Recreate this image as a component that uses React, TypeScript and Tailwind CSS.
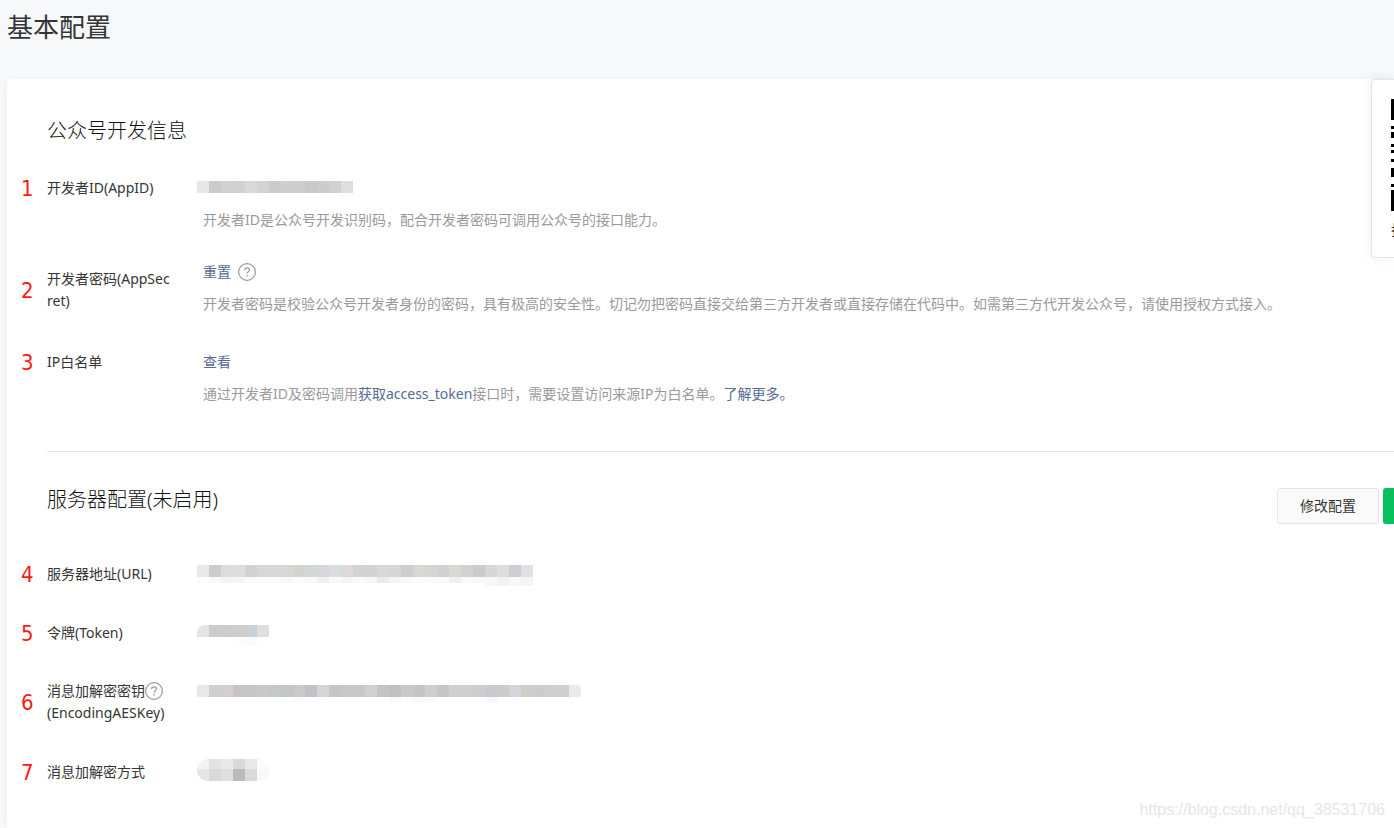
import type { ReactNode } from 'react'

const CELL = 12

type Band = { height: number; colors: string[] }

const appIdBands: Band[] = [
  {
    height: 12,
    colors: ['#e8e6e6', '#cbcacc', '#d2d1d2', '#d1d0cf', '#d8dad9', '#d3d3d4', '#cbcacc', '#cfcdce', '#cfcdca', '#c9c9ca', '#cdcccd', '#d0d2d2', '#dfdedf'],
  },
]

const urlBands: Band[] = [
  {
    height: 12,
    colors: ['#e9e9e9', '#cacccf', '#dddcda', '#dcdddd', '#d2d2d2', '#d6d8d7', '#d7d8d7', '#d7d7da', '#d4d3ce', '#d4d7d8', '#d7d7da', '#d8dde1', '#dcdad8', '#d2d2d1', '#d3d3d6', '#d8d8d9', '#d6d6da', '#cdcdd0', '#d8d7d3', '#d5d5d4', '#d1d1d4', '#dad8d4', '#d2d2d2', '#cdcacf', '#d7d6d2', '#dededf', '#cecdd3', '#e0e2e1'],
  },
  {
    height: 6,
    colors: ['#fcfcfc', '#f8f9f9', '#f2f4f3', '#f4f6f5', '#fafafa', '#fafafa', '#fbfbfb', '#f7f7f7', '#fafbfa', '#f8f9f8', '#f0f0f0', '#f8f9f9', '#f4f4f4', '#f9f9f9', '#f6f6f6', '#eaeaea', '#f4f4f4', '#f8f8f8', '#fafafa', '#f9fbfa', '#f8f9f9', '#eff0ee', '#f9f9f9', '#f8f8f8', '#f7f8f8', '#f1f1f2', '#f8f8f8', '#f3f5f4'],
  },
  {
    height: 3,
    colors: [...Array(24).fill('#ffffff'), '#f7f8f8', '#f1f1f2', '#f8f8f8', '#f3f5f4'],
  },
]

const tokenBands: Band[] = [
  { height: 12, colors: ['#e5e5e5', '#cdcbce', '#cccccc', '#cecdca', '#cad0d3', '#dedede'] },
  { height: 9, colors: ['#ffffff', '#ffffff', '#ffffff', '#fefdfb', '#f9fcff', '#ffffff'] },
]

const aesKeyBands: Band[] = [
  {
    height: 12,
    colors: ['#e9e8e6', '#cdcfd2', '#d1d0cf', '#c9c3c8', '#c5c6c5', '#c8cac5', '#c3c9ca', '#c5c6c3', '#cac9c8', '#c2c1c7', '#d5d5d2', '#c4c5c6', '#c8c9c4', '#cbc7c9', '#ced0d3', '#c0c7c3', '#c1bfc1', '#c9c9c9', '#c3c5c8', '#cfcfd0', '#c7c6c4', '#d0d0d1', '#ccd0cf', '#cfcdcc', '#cac9d0', '#caccc7', '#d4d4db', '#cecdca', '#cacccf', '#cfcfcc', '#cfcfcf', '#e8ebe9'],
  },
  {
    height: 6,
    colors: [...Array(8).fill('#ffffff'), '#fbfbfc', ...Array(7).fill('#ffffff'), '#fafafa', '#fdfefc', '#f9fbfa', '#fafafa', ...Array(4).fill('#ffffff'), '#f9f9fb'],
  },
]

const modeBands: Band[] = [
  { height: 10, colors: ['#f2f3f2', '#e4e2e0', '#e7eae8', '#d8dad9', '#e8e8e7', '#fbfbfe'] },
  { height: 12, colors: ['#e5e5e4', '#dad9d7', '#dfe0e1', '#babbbd', '#dadada', '#f8f8f9'] },
]

function Mosaic({ bands, className = '' }: { bands: Band[]; className?: string }) {
  const width = bands[0].colors.length * CELL
  const height = bands.reduce((sum, band) => sum + band.height, 0)
  let y = 0

  return (
    <svg width={width} height={height} shapeRendering="crispEdges" className={`shrink-0 ${className}`} aria-hidden="true">
      {bands.map((band, row) => {
        const top = y
        y += band.height
        return band.colors.map((color, i) => (
          <rect key={`${row}-${i}`} x={i * CELL} y={top} width={CELL} height={band.height} fill={color} />
        ))
      })}
    </svg>
  )
}

function HelpIcon() {
  return (
    <svg width="20" height="20" viewBox="0 0 20 20" fill="none" stroke="#9a9a9a" aria-hidden="true">
      <circle cx="10" cy="10" r="8.4" strokeWidth="1.2" />
      <path d="M7.6 8.2c0-1.5 1-2.4 2.4-2.4s2.4.9 2.4 2.2c0 1.7-2.3 1.9-2.3 3.8" strokeWidth="1.2" />
      <path d="M10.1 13v1.5" strokeWidth="1.3" />
    </svg>
  )
}

type RowProps = {
  index: number
  label: ReactNode
  labelClass?: string
  className?: string
  children: ReactNode
}

function Row({ index, label, labelClass = '', className = '', children }: RowProps) {
  return (
    <div className={`flex items-start ${className}`}>
      <div className={`flex shrink-0 items-center ${labelClass}`}>
        <span className="h-[22px] w-10 pl-[14px] font-['DejaVu_Sans_Condensed','DejaVu_Sans',sans-serif] text-[22px] leading-[24px] text-[#ff1a0f]">
          {index}
        </span>
        <div className="w-[126px] break-all">{label}</div>
      </div>
      <div className="min-w-0 flex-1 pl-6">{children}</div>
    </div>
  )
}

function Hint({ children }: { children: ReactNode }) {
  return <p className="mt-[10px] pl-[6px] text-[#9a9a9a]">{children}</p>
}

// [offset from previous bar, bar height]
const qrBars = [
  [0, 21],
  [6, 3],
  [3, 6],
  [6, 3],
  [3, 3],
  [6, 3],
  [6, 9],
  [7, 3],
  [3, 21],
]

function QrPanel() {
  return (
    <aside className="absolute top-0 right-0 h-[179px] w-[23px] overflow-hidden rounded-l border border-r-0 border-[#e4e5e8] bg-white pt-[19px] pl-[19px] shadow-[0_0_12px_rgba(0,0,0,0.08)]">
      {qrBars.map(([gap, height], i) => (
        <div key={i} className="bg-black" style={{ marginTop: gap, height }} />
      ))}
      <p className="mt-2 w-[14px]">扫</p>
    </aside>
  )
}

export default function App() {
  return (
    <div className="relative flex min-h-screen flex-col overflow-hidden bg-[#f6f8f9] pl-[7px] font-['Noto_Sans','Noto_Sans_CJK_SC',sans-serif] text-[14px] leading-[22px] text-[#353535]">
      <h1 className="pt-[7px] text-[26px] leading-10">基本配置</h1>

      <main className="relative mt-8 flex-1 rounded-tl bg-white pb-11 shadow-[0_1px_8px_rgba(0,0,0,0.04)]">
        <section>
          <h2 className="pt-9 pl-10 text-[20px] leading-8 font-light text-[#111]">公众号开发信息</h2>

          <Row index={1} label="开发者ID(AppID)" className="mt-[30px]">
            <div className="h-[22px] pt-1">
              <Mosaic bands={appIdBands} />
            </div>
            <Hint>开发者ID是公众号开发识别码，配合开发者密码可调用公众号的接口能力。</Hint>
          </Row>

          <Row index={2} label="开发者密码(AppSecret)" labelClass="mt-[7px]" className="mt-[30px]">
            <div className="flex items-center gap-[6px] pl-[6px]">
              <button type="button" className="text-[#576b95]">重置</button>
              <button type="button" aria-label="帮助">
                <HelpIcon />
              </button>
            </div>
            <Hint>
              开发者密码是校验公众号开发者身份的密码，具有极高的安全性。切记勿把密码直接交给第三方开发者或直接存储在代码中。如需第三方代开发公众号，请使用授权方式接入。
            </Hint>
          </Row>

          <Row index={3} label="IP白名单" className="mt-9">
            <div className="pl-[6px]">
              <button type="button" className="text-[#576b95]">查看</button>
            </div>
            <Hint>
              通过开发者ID及密码调用
              <a href="#token" className="text-[#576b95]">获取access_token</a>
              接口时，需要设置访问来源IP为白名单。
              <a href="#more" className="text-[#576b95]">了解更多。</a>
            </Hint>
          </Row>
        </section>

        <section className="mt-[46px] ml-10 border-t border-[#e4e5e8] pt-9">
          <div className="flex items-start justify-between">
            <h2 className="-mt-1 text-[20px] leading-8 font-light text-[#111]">服务器配置(未启用)</h2>
            <div className="flex gap-1">
              <button type="button" className="h-9 w-[102px] rounded-[3px] border border-[#e4e5e8] bg-[#fafafa]">
                修改配置
              </button>
              <button type="button" aria-label="启用" className="h-9 w-[11px] rounded-l-[3px] bg-[#07c160]" />
            </div>
          </div>

          <div className="mt-[39px] -ml-10 flex flex-col gap-[37px]">
            <Row index={4} label="服务器地址(URL)">
              <div className="h-[22px] pt-[2px]">
                <Mosaic bands={urlBands} />
              </div>
            </Row>
            <Row index={5} label="令牌(Token)">
              <div className="h-[22px] pt-[3px]">
                <Mosaic bands={tokenBands} className="rounded-l-lg" />
              </div>
            </Row>
            <Row
              index={6}
              className="-mt-px"
              label={
                <>
                  <span className="flex items-center">
                    消息加解密密钥
                    <button type="button" aria-label="帮助" className="-ml-px">
                      <HelpIcon />
                    </button>
                  </span>
                  (EncodingAESKey)
                </>
              }
            >
              <div className="h-[22px] pt-[5px]">
                <Mosaic bands={aesKeyBands} className="rounded-r" />
              </div>
            </Row>
            <Row index={7} label="消息加解密方式">
              <Mosaic bands={modeBands} className="-mt-[2px] rounded-full" />
            </Row>
          </div>
        </section>

        <QrPanel />
      </main>

      <span className="absolute right-[9px] bottom-[7px] font-['Liberation_Sans',Arial,sans-serif] text-[16px] leading-[22px] text-[#e6e6e6]">
        https://blog.csdn.net/qq_38531706
      </span>
    </div>
  )
}
